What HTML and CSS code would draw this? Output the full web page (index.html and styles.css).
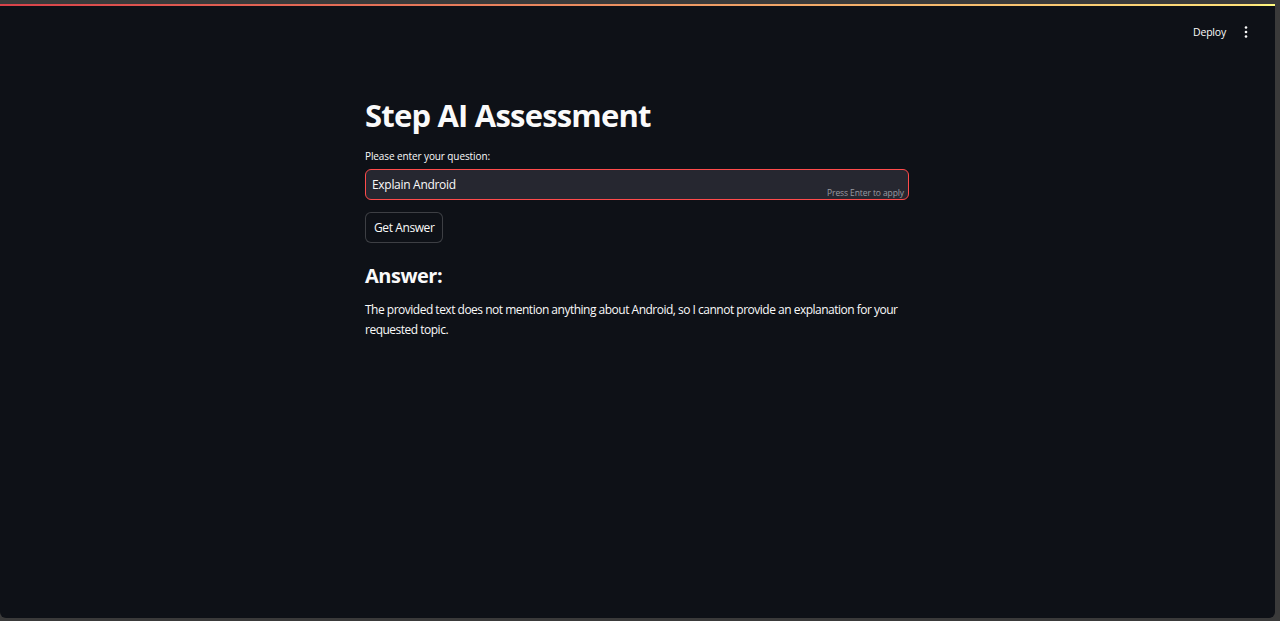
FILE: index.html
```html
<!DOCTYPE html>
<html>
<head>
<meta charset="utf-8">
<link rel="stylesheet" href="styles.css">
</head>
<body>
<div class="frame">
  <div class="app">
    <div class="topline"></div>
    <header class="header">
      <span class="deploy">Deploy</span>
      <span class="menu">
        <svg width="4" height="12" viewBox="0 0 4 12"><circle cx="2" cy="1.5" r="1.3" fill="#fafafa"/><circle cx="2" cy="6" r="1.3" fill="#fafafa"/><circle cx="2" cy="10.5" r="1.3" fill="#fafafa"/></svg>
      </span>
    </header>
    <main class="main">
      <h1 class="title">Step AI Assessment</h1>
      <label class="label">Please enter your question:</label>
      <div class="input">
        <span class="value">Explain Android</span>
        <span class="hint">Press Enter to apply</span>
      </div>
      <button class="btn">Get Answer</button>
      <h2 class="subtitle">Answer:</h2>
      <p class="answer">The provided text does not mention anything about Android, so I cannot provide an explanation for your requested topic.</p>
    </main>
  </div>
</div>
</body>
</html>
```
FILE: styles.css
```css
html, body {
  margin: 0;
  padding: 0;
  height: 100%;
}
body {
  background: #3a3a3a;
  font-family: "Open Sans", "Noto Sans", sans-serif;
  color: #fafafa;
  overflow: hidden;
}
.frame {
  height: 621px;
  padding: 4px 5px 3px 0;
  box-sizing: border-box;
}
.app {
  height: 100%;
  background: #0e1117;
  border-radius: 0 0 6px 6px;
  display: flex;
  flex-direction: column;
  overflow: hidden;
}
.topline {
  height: 2px;
  background: linear-gradient(90deg, #d9424a, #ffe27a 98%, #fffd80);
  flex: none;
}
.header {
  height: 50px;
  display: flex;
  align-items: center;
  justify-content: flex-end;
  padding-right: 27px;
  gap: 18px;
  margin-top: 1px;
  margin-bottom: -3px;
}
.deploy {
  font-size: 10.5px;
  color: #fafafa;
  letter-spacing: -0.2px;
}
.menu {
  display: flex;
  align-items: center;
}
.main {
  width: 544px;
  margin: 0 auto;
  position: relative;
  left: -0.5px;
}
.title {
  font-size: 31px;
  font-weight: 700;
  margin: 41px 0 0 0;
  line-height: 40px;
  letter-spacing: -0.8px;
}
.label {
  display: block;
  font-size: 10px;
  margin-top: 14px;
  line-height: 14px;
  letter-spacing: -0.1px;
}
.input {
  margin-top: 6px;
  height: 31px;
  box-sizing: border-box;
  border: 1px solid #ff4b4b;
  border-radius: 6px;
  background: #262730;
  position: relative;
  display: flex;
  align-items: center;
  padding-left: 6px;
}
.value {
  font-size: 12px;
  color: #fafafa;
  letter-spacing: -0.3px;
}
.hint {
  position: absolute;
  right: 4px;
  bottom: 1px;
  font-size: 8.5px;
  color: #9a9ba2;
  letter-spacing: -0.1px;
}
.btn {
  display: block;
  margin-top: 12px;
  height: 31px;
  padding: 0 8px;
  background: #0e1117;
  border: 1px solid rgba(250,250,250,0.2);
  border-radius: 6px;
  color: #fafafa;
  font-family: inherit;
  font-size: 12px;
  letter-spacing: -0.4px;
}
.subtitle {
  font-size: 20px;
  font-weight: 700;
  margin: 20px 0 0 0;
  line-height: 26px;
  letter-spacing: -0.5px;
}
.answer {
  font-size: 12px;
  line-height: 20px;
  margin: 11px 0 0 0;
  letter-spacing: -0.5px;
}
```
